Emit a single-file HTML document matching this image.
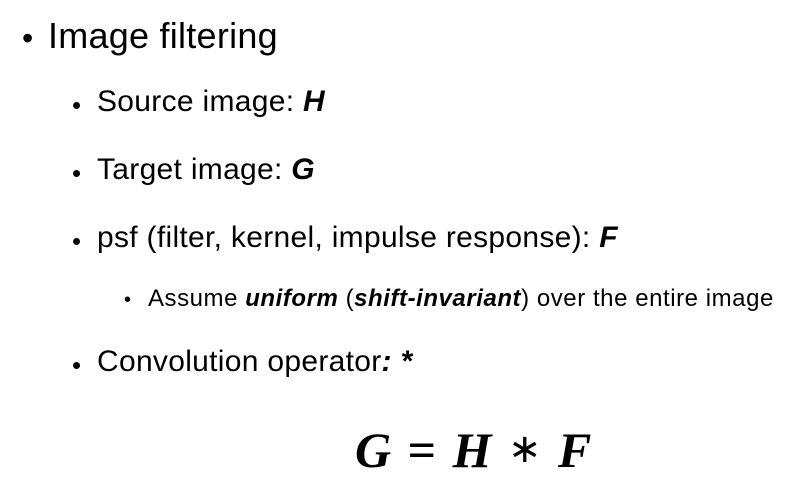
<!DOCTYPE html>
<html><head><meta charset="utf-8"><style>
body{margin:0;width:803px;height:499px;background:#fff;overflow:hidden;position:relative;font-family:"Liberation Sans",sans-serif;color:#000}
.t{position:absolute;white-space:nowrap;line-height:1}
.b{position:absolute;white-space:nowrap;line-height:1}
i b,b i{font-weight:bold;font-style:italic}
</style></head><body>
<div class="b" style="left:22px;top:22px;font-size:32px">•</div>
<div class="t" style="left:48px;top:18px;font-size:36px;letter-spacing:0.25px">Image filtering</div>

<div class="b" style="left:72px;top:92px;font-size:26px">•</div>
<div class="t" style="left:97px;top:87px;font-size:30px;letter-spacing:0.3px">Source image: <b><i>H</i></b></div>

<div class="b" style="left:72px;top:160px;font-size:26px">•</div>
<div class="t" style="left:97px;top:155px;font-size:30px;letter-spacing:0.3px">Target image: <b><i>G</i></b></div>

<div class="b" style="left:72px;top:228px;font-size:26px">•</div>
<div class="t" style="left:97px;top:223px;font-size:30px;letter-spacing:0.3px">psf (filter, kernel, impulse response): <b><i>F</i></b></div>

<div class="b" style="left:124px;top:290px;font-size:20px">•</div>
<div class="t" style="left:148px;top:287px;font-size:24px;letter-spacing:0.55px">Assume <b><i>uniform</i></b> (<b><i>shift-invariant</i></b>) over the entire image</div>

<div class="b" style="left:72px;top:352px;font-size:26px">•</div>
<div class="t" style="left:97px;top:347px;font-size:30px;letter-spacing:0.3px">Convolution operator<b><i>: *</i></b></div>

<div class="t" style="left:355px;top:425px;font-size:50px;font-family:'Liberation Serif',serif;font-weight:bold;font-style:italic;word-spacing:4px">G <span style="font-style:normal">=</span> H <span style="font-style:normal;font-weight:normal;font-size:40px;position:relative;top:-5px">∗</span> F</div>
</body></html>
